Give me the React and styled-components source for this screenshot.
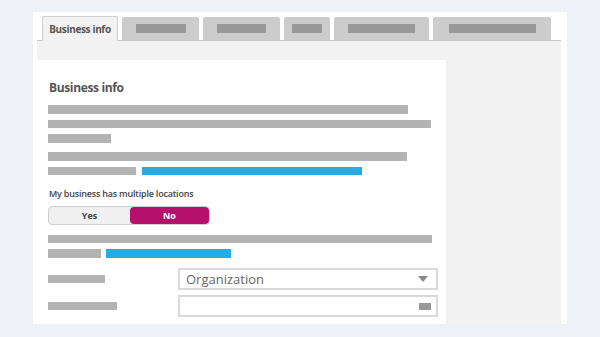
import React from "react";
import styled, { createGlobalStyle } from "styled-components";

const GlobalStyle = createGlobalStyle`
  body {
    margin: 0;
    background: #eef2f7;
    font-family: "Open Sans", "Liberation Sans", sans-serif;
  }
`;

const Frame = styled.div`
  box-sizing: border-box;
  width: 534px;
  height: 312px;
  margin: 12px 0 0 33px;
  padding: 4px 6px 0 4px;
  background: #fff;
  display: flex;
  flex-direction: column;
`;

const TabRow = styled.div`
  display: flex;
  align-items: flex-end;
  gap: 4px;
  height: 24px;
  padding-left: 5px;
`;

const Tab = styled.div`
  box-sizing: border-box;
  width: ${(p) => p.$w}px;
  height: ${(p) => (p.$active ? 25 : 23)}px;
  margin-bottom: ${(p) => (p.$active ? -1 : 0)}px;
  position: relative;
  z-index: ${(p) => (p.$active ? 1 : 0)};
  display: flex;
  align-items: center;
  justify-content: center;
  background: ${(p) => (p.$active ? "#f2f2f2" : "#cccccc")};
  border: ${(p) => (p.$active ? "1px solid #cfcfcf" : "none")};
  border-bottom: none;
  border-radius: 2px 2px 0 0;
  font-size: 10px;
  font-weight: 700;
  letter-spacing: -0.35px;
  color: #555;
  padding-bottom: 1px;
`;

const TabBar = styled.span`
  display: block;
  width: ${(p) => p.$w}px;
  height: 9px;
  background: #999;
  margin-top: 1px;
`;

const Panel = styled.div`
  flex: 1;
  display: flex;
  background: #f2f2f2;
  border-top: 1px solid #c8c8c8;
  padding-top: 19px;
`;

const Card = styled.div`
  box-sizing: border-box;
  width: 409px;
  background: #fff;
  padding: 19px 8px 0 11px;
`;

const Heading = styled.h2`
  margin: 0 0 8px;
  padding-left: 1px;
  font-size: 12px;
  line-height: 18px;
  font-weight: 700;
  letter-spacing: -0.35px;
  color: #555;
`;

const Stack = styled.div`
  display: flex;
  flex-direction: column;
  gap: 6px;
  margin-top: ${(p) => p.$mt || 0}px;
`;

const Line = styled.div`
  display: flex;
  gap: ${(p) => p.$gap || 6}px;
`;

const Bar = styled.div`
  width: ${(p) => p.$w}px;
  height: 8.5px;
  background: ${(p) => (p.$link ? "#29abe2" : "#b3b3b3")};
`;

const Label = styled.div`
  margin: 12.5px 0 6px;
  padding-left: 1px;
  font-size: 9px;
  line-height: 12px;
  font-weight: 600;
  letter-spacing: -0.2px;
  color: #444;
`;

const Toggle = styled.div`
  box-sizing: border-box;
  width: 162px;
  height: 19px;
  display: flex;
  border: 1px solid #cfcfcf;
  border-radius: 4px;
  background: #f0f0f0;
  overflow: hidden;
`;

const ToggleOption = styled.div`
  flex: ${(p) => (p.$on ? 1 : "0 0 81px")};
  display: flex;
  align-items: center;
  justify-content: center;
  font-size: 9px;
  font-weight: 700;
  color: ${(p) => (p.$on ? "#fff" : "#444")};
  background: ${(p) => (p.$on ? "#b5106b" : "transparent")};
  border-radius: ${(p) => (p.$on ? "4px" : 0)};
`;

const FieldRow = styled.div`
  display: flex;
  align-items: center;
  margin-top: ${(p) => p.$mt}px;
`;

const FieldLabel = styled.div`
  width: 130px;
  display: flex;
`;

const Field = styled.div`
  box-sizing: border-box;
  width: 260px;
  height: 22px;
  display: flex;
  align-items: center;
  justify-content: space-between;
  border: 2px solid #dadada;
  padding: 0 ${(p) => p.$pr}px 0 6px;
  font-size: 13px;
  line-height: 18px;
  color: #666;
`;

const Chip = styled.span`
  width: 12px;
  height: 7px;
  background: #999;
  margin-left: auto;
`;

const tabs = [
  { w: 77, bar: 50 },
  { w: 77, bar: 49 },
  { w: 46, bar: 30 },
  { w: 95, bar: 67 },
  { w: 118, bar: 87 },
];

export default function App() {
  return (
    <>
      <GlobalStyle />
      <Frame>
        <TabRow>
          <Tab $active $w={76}>Business info</Tab>
          {tabs.map((t, i) => (
            <Tab key={i} $w={t.w}>
              <TabBar $w={t.bar} />
            </Tab>
          ))}
        </TabRow>
        <Panel>
          <Card>
            <Heading>Business info</Heading>
            <Stack>
              <Bar $w={360} />
              <Bar $w={383} />
              <Bar $w={63} />
            </Stack>
            <Stack $mt={9.5}>
              <Bar $w={359} />
              <Line>
                <Bar $w={88} />
                <Bar $link $w={220} />
              </Line>
            </Stack>
            <Label>My business has multiple locations</Label>
            <Toggle>
              <ToggleOption>Yes</ToggleOption>
              <ToggleOption $on>No</ToggleOption>
            </Toggle>
            <Stack $mt={10}>
              <Bar $w={384} />
              <Line $gap={5}>
                <Bar $w={53} />
                <Bar $link $w={125} />
              </Line>
            </Stack>
            <FieldRow $mt={10.5}>
              <FieldLabel>
                <Bar $w={57} />
              </FieldLabel>
              <Field $pr={8}>
                Organization
                <svg width="10" height="6" viewBox="0 0 10 6">
                  <polygon points="0,0 10,0 5,6" fill="#8a8a8a" />
                </svg>
              </Field>
            </FieldRow>
            <FieldRow $mt={5}>
              <FieldLabel>
                <Bar $w={69} />
              </FieldLabel>
              <Field $pr={5}>
                <Chip />
              </Field>
            </FieldRow>
          </Card>
        </Panel>
      </Frame>
    </>
  );
}
